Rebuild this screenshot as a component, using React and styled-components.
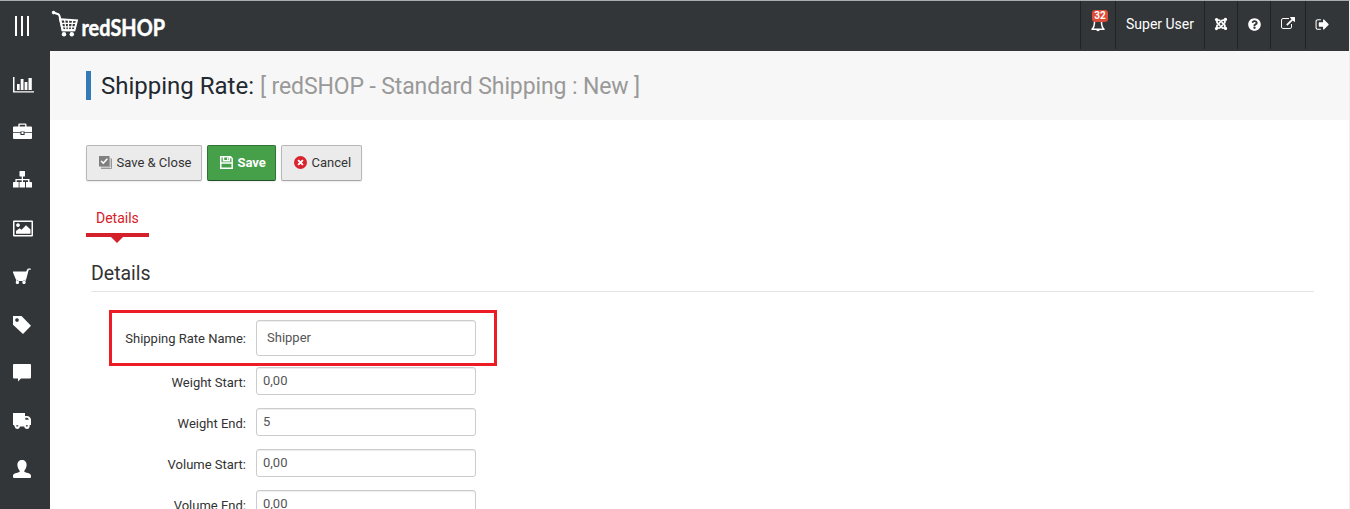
import React from "react";
import styled, { createGlobalStyle } from "styled-components";
import { FaJoomla, FaQuestionCircle } from "react-icons/fa";

const GlobalStyle = createGlobalStyle`
  * { box-sizing: border-box; }
  body { margin: 0; background: #fff; overflow: hidden; }
  body, input { font-family: Roboto, "Liberation Sans", sans-serif; font-size: 13px; color: #333; }
`;

const Page = styled.div`
  height: 509px;
  display: flex;
  flex-direction: column;
  overflow: hidden;
  border-top: 1px solid #a9abad;
  border-right: 1px solid #efefef;
`;

const TopBar = styled.header`
  height: 50px;
  flex: none;
  display: flex;
  background: #323639;
  color: #fff;
`;

const MenuToggle = styled.button`
  width: 50px;
  height: 50px;
  padding: 0 0 0 15px;
  border: 0;
  background: none;
  display: flex;
  align-items: center;
  gap: 4px;
`;

const ToggleBar = styled.span`
  width: 2px;
  height: 20px;
  background: #fff;
`;

const Actions = styled.div`
  margin-left: auto;
  height: 48px;
  display: flex;
`;

const Action = styled.a`
  width: ${(p) => p.$width}px;
  border-left: 1px solid #1e2325;
  display: flex;
  align-items: center;
  justify-content: ${(p) => (p.$start ? "flex-start" : "center")};
  padding-left: ${(p) => p.$start || 0}px;
  padding-bottom: 2px;
  position: relative;
  font-size: 14px;
  color: #fff;
  svg { display: block; }
`;

const Badge = styled.span`
  position: absolute;
  left: 11px;
  top: 9px;
  width: 16px;
  height: 12px;
  border-radius: 3px;
  background: #dd4b39;
  font-size: 10px;
  font-weight: 700;
  line-height: 12px;
  text-align: center;
`;

const Body = styled.div`
  flex: 1;
  min-height: 0;
  display: flex;
`;

const Sidebar = styled.nav`
  width: 50px;
  flex: none;
  padding-top: 9px;
  background: #323639;
`;

const SideItem = styled.a`
  height: 48px;
  padding-left: 13px;
  padding-top: ${(p) => p.$drop || 0}px;
  display: flex;
  align-items: center;
  color: #fff;
`;

const Main = styled.main`
  flex: 1;
  min-width: 0;
`;

const TitleBar = styled.div`
  height: 69px;
  padding: 20px 0 0 36px;
  background: #f7f7f7;
`;

const Title = styled.h1`
  margin: 0;
  height: 29px;
  border-left: 5px solid #337ab7;
  padding-left: 10px;
  font-size: 24px;
  font-weight: 400;
  line-height: 30px;
  color: #22292f;
  white-space: nowrap;
  small { font-size: 23px; letter-spacing: -0.12px; color: #999; }
`;

const Content = styled.div`
  padding: 25px 35px 0 36px;
`;

const Toolbar = styled.div`
  display: flex;
  gap: 5px;
`;

const ToolButton = styled.button`
  width: ${(p) => p.$width}px;
  height: 36px;
  padding: 0 0 2px 11px;
  display: flex;
  align-items: center;
  border: 1px solid ${(p) => (p.$primary ? "#2f7433" : "#b7b7b7")};
  border-bottom-color: ${(p) => (p.$primary ? "#215224" : "#a5a5a5")};
  border-radius: 2px;
  background: ${(p) => (p.$primary ? "#46a04a" : "#ebebeb")};
  box-shadow: 0 1px 2px rgba(0, 0, 0, 0.08);
  color: ${(p) => (p.$primary ? "#fff" : "#333")};
  font: ${(p) => (p.$primary ? 700 : 400)} 13px Roboto, sans-serif;
  white-space: nowrap;
  svg { margin-right: 4.5px; flex: none; }
`;

const Tab = styled.a`
  margin-top: 21px;
  width: 63px;
  height: 35px;
  padding-left: 10px;
  display: block;
  position: relative;
  border-bottom: 4px solid #d4202a;
  font-size: 14px;
  line-height: 33px;
  color: #d4202a;
  &::after {
    content: "";
    position: absolute;
    left: 25px;
    top: 35px;
    border: 6px solid transparent;
    border-top-color: #d4202a;
    border-bottom: 0;
  }
`;

const SectionTitle = styled.h2`
  margin: 23px 0 18px 5px;
  height: 32px;
  border-bottom: 1px solid #e5e5e5;
  font-size: 19.5px;
  font-weight: 400;
  line-height: 28px;
`;

const Form = styled.form`
  margin-left: 23px;
  width: 388px;
`;

const Field = styled.label`
  display: flex;
  align-items: center;
  height: ${(p) => (p.$highlight ? 56 : 28)}px;
  border: ${(p) => (p.$highlight ? "3px solid #ed1c24" : "0 solid")};
  padding-left: ${(p) => (p.$highlight ? 0 : 3)}px;
  margin-bottom: ${(p) => (p.$highlight ? 1 : 13)}px;
`;

const FieldLabel = styled.span`
  width: 134px;
  margin-right: 10px;
  padding-top: ${(p) => (p.$highlight ? 1 : 3)}px;
  text-align: right;
`;

const TextInput = styled.input`
  width: 220px;
  height: ${(p) => (p.$highlight ? 36 : 28)}px;
  padding: ${(p) => (p.$highlight ? "0 10px 1px" : "0 6px 1px")};
  border: 1px solid #ccc;
  border-radius: 3px;
  outline: 0;
  box-shadow: inset 0 1px 1px rgba(0, 0, 0, 0.075);
  color: #555;
`;

const Glyph = ({ w, h, box, d }) => (
  <svg width={w} height={h} viewBox={box} fill="currentColor" fillRule="evenodd">
    <path d={d} />
  </svg>
);

const menu = [
  { name: "Statistics", drop: 2, w: 21, h: 16, box: "0 0 21 16", d: "M0 0H1.500V14.300H21V15.600H0ZM4 7H6.700V13H4ZM7.700 2H10.500V13H7.700ZM11.600 5H14.400V13H11.600ZM15.500 1H18.800V13H15.500Z" },
  { name: "Orders", w: 19, h: 18, box: "0 0 19 18", d: "M1 3.500H5.300V1.700Q5.300.5 6.500.5H12.300Q13.500.5 13.500 1.700V3.500H18Q19 3.500 19 4.500V9H11.600V8.600H7.400V9H0V4.500Q0 3.500 1 3.500ZM6.700 1.700V3.500H12.100V1.700ZM0 9.800H7.400V12H11.600V9.800H19V15Q19 16 18 16H1Q0 16 0 15ZM8.500 9H10.500V11H8.500Z" },
  { name: "Categories", w: 19, h: 18, box: "0 0 19 18", d: "M7 0H11.500Q12 0 12 .5V5Q12 5.500 11.500 5.500H10V8H16.500V11H18.300Q19 11 19 11.700V16.500H13V11H15V9.200H10V11H12V16.500H6.500V11H8.700V9.200H3.700V11H5.700V16.500H0V11.700Q0 11 .7 11H2.400V8H8.700V5.500H7Q6.500 5.500 6.500 5V.5Q6.500 0 7 0Z" },
  { name: "Media", drop: 1, w: 20, h: 17, box: "0 0 20 17", d: "M1 .5H19Q20 .5 20 1.500V15.500Q20 16.500 19 16.500H1Q0 16.500 0 15.500V1.500Q0 .5 1 .5ZM1.500 2V15H18.500V2ZM5 3.200A1.900 1.900 0 1 1 4.990 3.200ZM3 13.800V11L6.500 8.300 8.500 9.800 13 5.200 17.500 9.600V13.800Z" },
  { name: "Shop", drop: 2, w: 18, h: 18, box: "0 0 18 18", d: "M0 3.500H13.200L14.300 1.300Q14.700.5 15.600.5H17.300Q18 .5 18 1.100T17.300 1.800H15.700L13.300 11Q13.100 11.900 12.200 11.900H3.800Q3 11.900 2.700 11L0 4.600ZM3 12H12.700V13H3ZM4.400 12.600A1.700 1.700 0 1 1 4.390 12.600ZM11 12.600A1.700 1.700 0 1 1 10.990 12.600Z" },
  { name: "Discounts", drop: 2, w: 18, h: 18, box: "0 0 18 18", d: "M0 0H8.500L18 9.700 10 18 0 8.700ZM4 2.200A1.800 1.800 0 1 0 4.010 2.200Z" },
  { name: "Messages", drop: 2, w: 18, h: 18, box: "0 0 18 18", d: "M1 0H17Q18 0 18 1V13.500Q18 14.500 17 14.500H8L5 17.500V14.500H1Q0 14.500 0 13.500V1Q0 0 1 0Z" },
  { name: "Shipping", drop: 2, w: 18, h: 18, box: "0 0 18 18", d: "M0 1H12V4H14Q17.200 4 18 7.500V13H16.600A2.500 2.500 0 0 1 16.300 15.400Q15.700 16.900 13.800 17Q11.500 16.800 11.100 14.500H7Q6.500 17 4.200 17Q2 16.800 1.600 14.500L1 13H0ZM12.400 5.800V7.700H15.800Q15.400 5.800 13.800 5.800ZM3.300 13.300V14.500H5.200V13.300ZM12.900 13.300V14.500H14.800V13.300Z" },
  { name: "Customers", drop: 2, w: 18, h: 18, box: "0 0 18 18", d: "M9 0C11.800 0 13.700 2 13.600 5C13.500 7.600 12.500 9.300 11.400 10.500V12.100C14 13 18 13.500 18 15.800V17Q18 18 17 18H1Q0 18 0 17V15.800C0 13.500 4 13 6.600 12.100V10.500C5.500 9.300 4.500 7.600 4.400 5C4.300 2 6.200 0 9 0Z" },
];

const externalLink = "M1408 928v320q0 119-84.500 203.500t-203.500 84.500h-832q-119 0-203.500-84.500t-84.500-203.500v-832q0-119 84.500-203.500t203.500-84.500h704q14 0 23 9t9 23v64q0 14-9 23t-23 9h-704q-66 0-113 47t-47 113v832q0 66 47 113t113 47h832q66 0 113-47t47-113v-320q0-14 9-23t23-9h64q14 0 23 9t9 23zm384-864v512q0 26-19 45t-45 19-45-19l-176-176-652 652q-10 10-23 10t-23-10l-114-114q-10-10-10-23t10-23l652-652-176-176q-19-19-19-45t19-45 45-19h512q26 0 45 19t19 45z";
const signOut = "M704 1440q0 4 1 20t.5 26.500-3 23.500-10 19.500-20.500 6.500h-320q-119 0-203.500-84.500t-84.500-203.500v-704q0-119 84.500-203.500t203.500-84.500h320q13 0 22.500 9.500t9.500 22.500q0 4 1 20t.5 26.500-3 23.500-10 19.500-20.500 6.500h-320q-66 0-113 47t-47 113v704q0 66 47 113t113 47h312l11.500 1 11.500 3 8 5.500 7 9 2 13.500zm928-544q0 26-19 45l-544 544q-19 19-45 19t-45-19-19-45v-288h-448q-26 0-45-19t-19-45v-384q0-26 19-45t45-19h448v-288q0-26 19-45t45-19 45 19l544 544q19 19 19 45z";

const Logo = () => (
  <svg width="118" height="50" viewBox="50 1 118 50" fill="none" stroke="#fff">
    <circle cx="53.600" cy="12.600" r="1.800" fill="#fff" stroke="none" />
    <path d="M54 12.800L58.300 14.200Q59.300 14.800 59.800 17L62.500 30.200H74.500" strokeWidth="2" />
    <path d="M60 19.200L77 20.300L74.500 30.200H62.700Z" strokeWidth="1.900" />
    <path d="M64.600 20L66 30M68.500 20V30M72.700 20L71.300 30M61 23.400H76M62 26.800H75" strokeWidth="1.300" />
    <circle cx="64" cy="34.200" r="2.200" fill="#fff" stroke="none" />
    <circle cx="71.800" cy="34.200" r="2.200" fill="#fff" stroke="none" />
    <text x="81.500" y="36.400" fill="#fff" stroke="#fff" strokeWidth="0.500" fontFamily="Lato" fontSize="22.800" fontWeight="700" textLength="83.500" lengthAdjust="spacingAndGlyphs">redSHOP</text>
  </svg>
);

const Bell = () => (
  <svg width="14" height="18" viewBox="0 0 14 18" fill="none" stroke="#fff" strokeWidth="1.500">
    <path d="M7 2V3.500M1 14.200Q3.500 12 3.500 7Q3.700 3.700 7 3.700T10.500 7Q10.500 12 13 14.200Z" strokeLinejoin="round" />
    <path d="M5.200 14.500A1.800 1.800 0 0 0 8.800 14.500Z" fill="#fff" stroke="none" />
  </svg>
);

const SaveCloseIcon = () => (
  <svg width="14" height="14" viewBox="0 0 14 14">
    <path d="M3 12H12V3" stroke="#a5a5a5" strokeWidth="1" fill="none" />
    <path d="M13.500 3.500V13.500H3" stroke="#999" strokeWidth="1" fill="none" />
    <rect x="1" y="1" width="10.500" height="10.500" fill="#808080" />
    <path d="M3.200 6L5.300 8.200 9.300 3.800" stroke="#fff" strokeWidth="1.600" fill="none" />
  </svg>
);

const SaveIcon = () => (
  <svg width="14" height="14" viewBox="0 0 14 14" fill="none" stroke="#fff" strokeWidth="1.500">
    <path d="M1.750 1.750H11.500L13.200 3.500V13.200H1.750ZM4.500 2V5.800H10.500V2M2 8H13" />
    <path d="M8.700 2.500V4.800" />
  </svg>
);

const CancelIcon = () => (
  <svg width="14" height="14" viewBox="0 0 14 14">
    <circle cx="7.500" cy="7.500" r="6.500" fill="#d9232e" />
    <path d="M5.100 5.100L9.900 9.900M9.900 5.100L5.100 9.900" stroke="#fff" strokeWidth="1.900" />
  </svg>
);

const fields = [
  { label: "Shipping Rate Name:", value: "Shipper", highlight: true },
  { label: "Weight Start:", value: "0,00" },
  { label: "Weight End:", value: "5" },
  { label: "Volume Start:", value: "0,00" },
  { label: "Volume End:", value: "0,00" },
];

export default function App() {
  return (
    <>
      <GlobalStyle />
      <Page>
        <TopBar>
          <MenuToggle aria-label="Toggle menu"><ToggleBar /><ToggleBar /><ToggleBar /></MenuToggle>
          <Logo />
          <Actions>
            <Action $width={35}><Bell /><Badge>32</Badge></Action>
            <Action $width={89} $start={10}>Super User</Action>
            <Action $width={33}><FaJoomla size={14} /></Action>
            <Action $width={33}><FaQuestionCircle size={13} /></Action>
            <Action $width={35}><Glyph w={14} h={14} box="0 0 1792 1792" d={externalLink} /></Action>
            <Action $width={44} $start={9}><Glyph w={15} h={15} box="0 0 1792 1792" d={signOut} /></Action>
          </Actions>
        </TopBar>
        <Body>
          <Sidebar>
            {menu.map(({ name, drop, ...glyph }) => (
              <SideItem key={name} $drop={drop} aria-label={name}><Glyph {...glyph} /></SideItem>
            ))}
          </Sidebar>
          <Main>
            <TitleBar>
              <Title>Shipping Rate: <small>[ redSHOP - Standard Shipping : New ]</small></Title>
            </TitleBar>
            <Content>
              <Toolbar>
                <ToolButton $width={116}><SaveCloseIcon />Save &amp; Close</ToolButton>
                <ToolButton $width={69} $primary><SaveIcon />Save</ToolButton>
                <ToolButton $width={81}><CancelIcon />Cancel</ToolButton>
              </Toolbar>
              <Tab>Details</Tab>
              <SectionTitle>Details</SectionTitle>
              <Form>
                {fields.map((f) => (
                  <Field key={f.label} $highlight={f.highlight}>
                    <FieldLabel $highlight={f.highlight}>{f.label}</FieldLabel>
                    <TextInput $highlight={f.highlight} defaultValue={f.value} />
                  </Field>
                ))}
              </Form>
            </Content>
          </Main>
        </Body>
      </Page>
    </>
  );
}
